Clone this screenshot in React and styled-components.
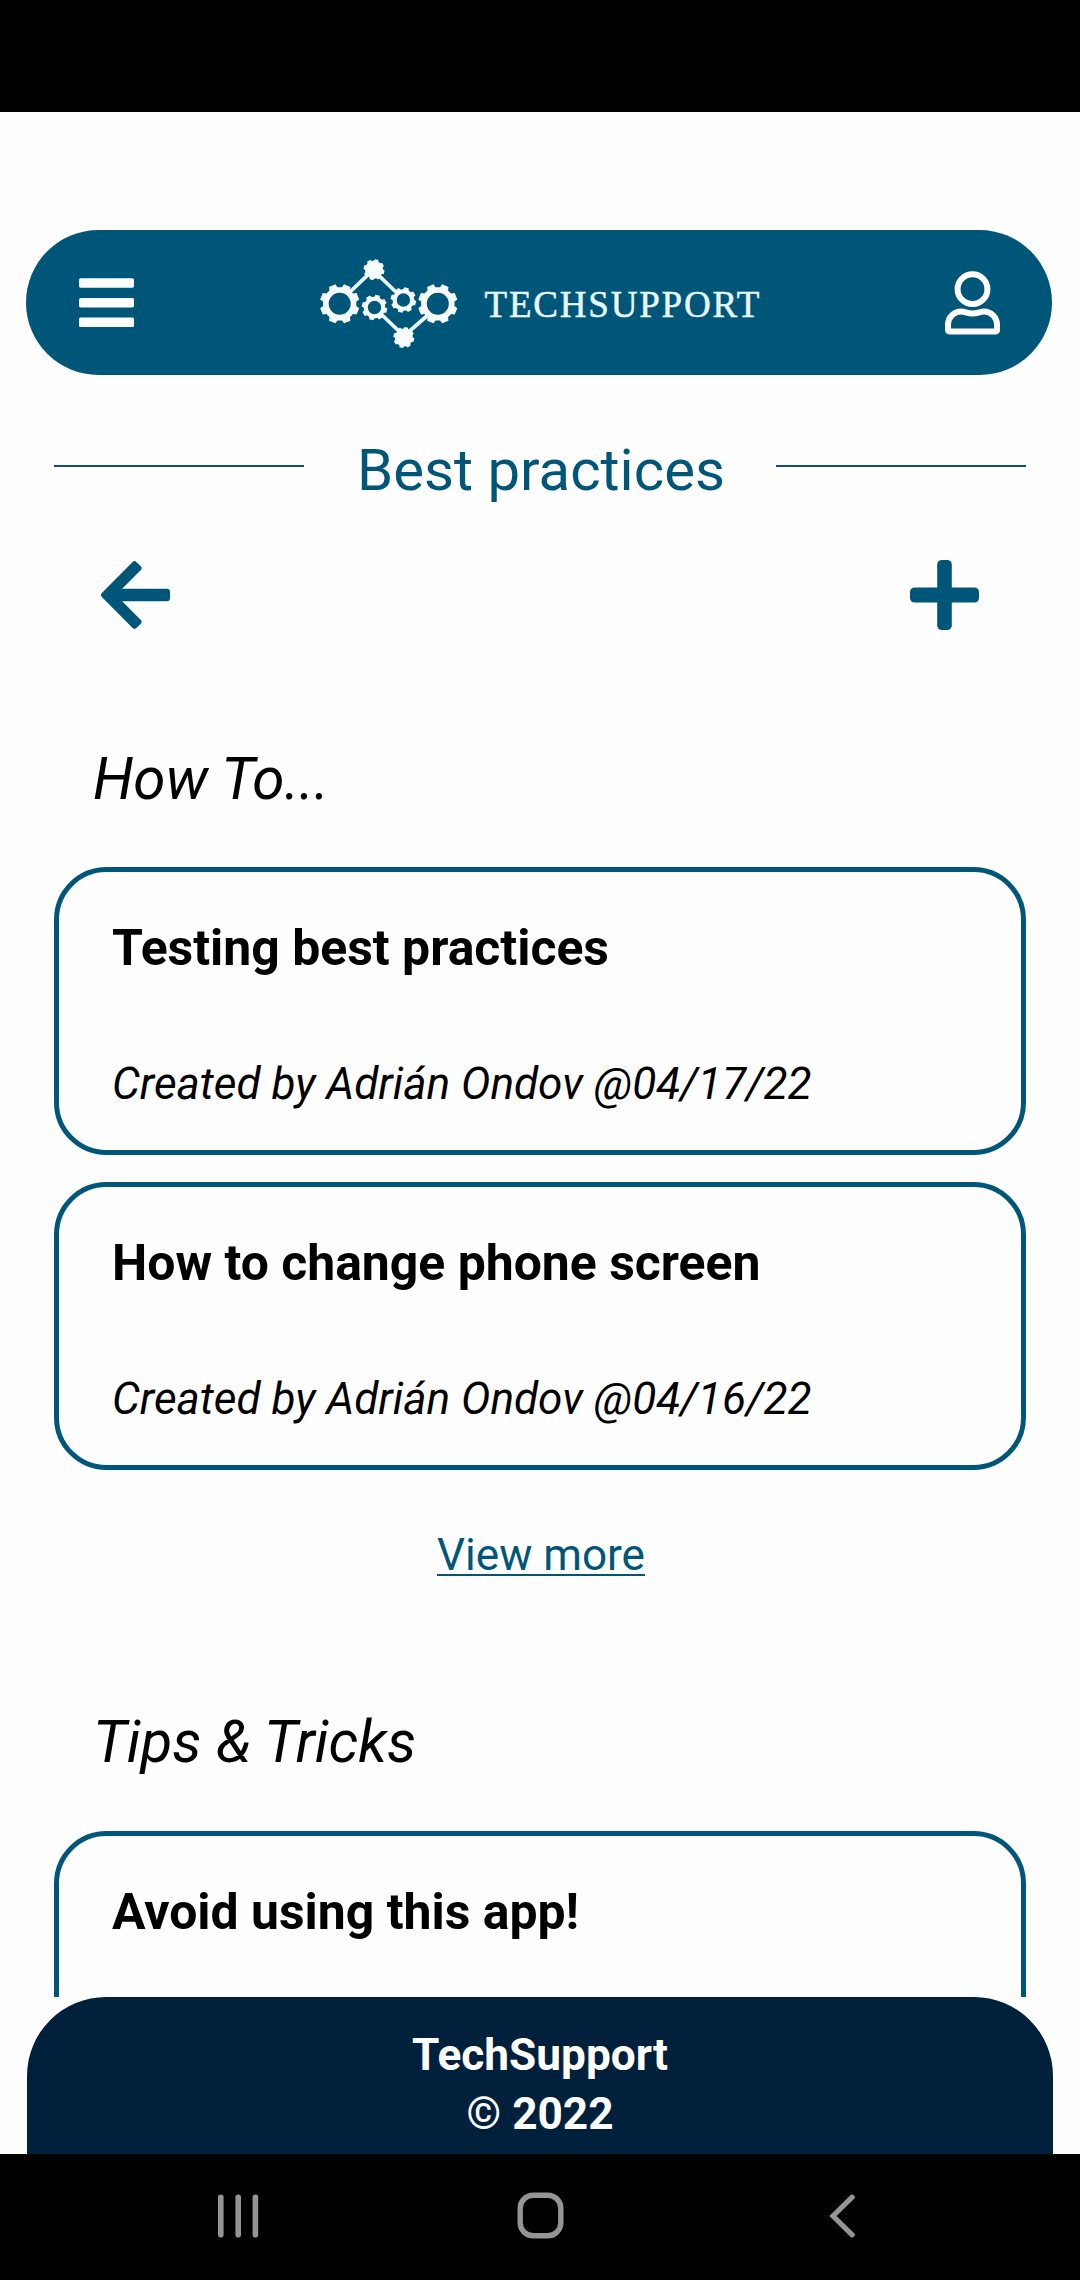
import React from "react";
import styled, { createGlobalStyle } from "styled-components";

const teal = "#005679";
const navy = "#00203b";

const GlobalStyle = createGlobalStyle`
  * { box-sizing: border-box; }
  body { margin: 0; background: #fefefe; font-family: Roboto, sans-serif; }
  h1, h2, h3, p { margin: 0; font-weight: 400; }
  svg { display: block; flex: none; }
  button { border: 0; padding: 0; background: none; }
`;

const Screen = styled.div`
  display: flex;
  flex-direction: column;
  width: 1080px;
  height: 2280px;
  overflow: hidden;
  background: #fefefe;
`;

const StatusBar = styled.div`
  flex: none;
  height: 112px;
  background: #000;
`;

const Content = styled.main`
  flex: 1;
  min-height: 0;
  overflow: hidden;
  padding: 118px 54px 0;
`;

const Header = styled.header`
  display: flex;
  align-items: center;
  justify-content: space-between;
  height: 145px;
  margin: 0 -26px 0 -28px;
  padding: 0 52px 0 53px;
  border-radius: 72.5px;
  background: ${teal};
`;

const Brand = styled.div`
  display: flex;
  align-items: center;
  gap: 27px;
`;

const BrandName = styled.span`
  width: 275px;
  padding-top: 4px;
  font: 37px/44px "Liberation Serif", serif;
  letter-spacing: 1.8px;
  color: #e9f8ff;
  -webkit-text-stroke: 0.5px #e9f8ff;
  white-space: nowrap;
`;

const TitleRow = styled.div`
  display: flex;
  align-items: center;
  justify-content: space-between;
  height: 68px;
  margin-top: 61px;
`;

const Rule = styled.span`
  width: 250px;
  height: 2px;
  margin-bottom: 8px;
  background: #10526c;
`;

const PageTitle = styled.h1`
  padding-left: 2px;
  font-size: 58.1px;
  line-height: 68px;
  color: ${teal};
  white-space: nowrap;
`;

const Actions = styled.div`
  display: flex;
  align-items: center;
  justify-content: space-between;
  height: 70px;
  margin-top: 56px;
  padding: 0 47px 0 46px;
`;

const Section = styled.section`
  margin-top: ${(p) => p.$gap}px;
`;

const SectionTitle = styled.h2`
  padding-left: 39px;
  font-size: 58.3px;
  line-height: 68px;
  font-style: italic;
  color: #000;
`;

const CardList = styled.div`
  display: flex;
  flex-direction: column;
  gap: 27px;
  margin-top: ${(p) => p.$gap}px;
`;

const Card = styled.article`
  height: 288px;
  padding: 46px 53px 0;
  border: 5px solid ${teal};
  border-radius: 52.5px;
`;

const CardTitle = styled.h3`
  font-size: 49.9px;
  line-height: 60px;
  font-weight: 700;
  color: #000;
`;

const CardMeta = styled.p`
  margin-top: 79px;
  font-size: 44.1px;
  line-height: 54px;
  font-style: italic;
  color: #000;
`;

const ViewMore = styled.a`
  display: block;
  width: fit-content;
  margin: 58px auto 0;
  padding-left: 2px;
  font-size: 44.1px;
  line-height: 54px;
  color: ${teal};
  text-decoration: underline;
  text-decoration-thickness: 2px;
  text-underline-offset: 4px;
  text-decoration-skip-ink: none;
`;

const Footer = styled.footer`
  flex: none;
  height: 157px;
  margin: 0 27px;
  padding-top: 29px;
  border-radius: 79px 79px 0 0;
  background: ${navy};
  color: #fff;
  font-size: 44.2px;
  line-height: 59px;
  font-weight: 700;
  text-align: center;
`;

const NavBar = styled.nav`
  display: flex;
  flex: none;
  align-items: center;
  justify-content: space-between;
  height: 126px;
  padding: 0 224px 3px 217px;
  background: #000;
`;

const HomeButton = styled.button`
  margin-right: 8px;
`;

function gearPath(cx, cy, outer, root, teeth, turn) {
  const step = (Math.PI * 2) / teeth;
  const pts = [];
  for (let i = 0; i < teeth; i++) {
    const a = turn + i * step;
    [
      [-0.33, root],
      [-0.22, outer],
      [0.22, outer],
      [0.33, root],
    ].forEach(([f, r]) => {
      const t = a + f * step;
      pts.push(`${(cx + r * Math.cos(t)).toFixed(2)} ${(cy + r * Math.sin(t)).toFixed(2)}`);
    });
  }
  return `M${pts.join("L")}Z`;
}

const Gear = ({ x, y, outer, root, hole, teeth = 8, turn = Math.PI / 8 }) => (
  <path
    fillRule="evenodd"
    d={
      gearPath(x, y, outer, root, teeth, turn) +
      (hole ? `M${x - hole} ${y}a${hole} ${hole} 0 1 0 ${hole * 2} 0a${hole} ${hole} 0 1 0 ${-hole * 2} 0Z` : "")
    }
  />
);

const Logo = () => (
  <svg width="138" height="90" viewBox="320 258 138 90" fill="#f6fdff">
    <path d="M350 292L373 270L398 294M381 314L404 336L428 315" fill="none" stroke="#e6f6fc" strokeWidth="3.8" />
    <Gear x={339.7} y={303.8} outer={20} root={16.8} hole={11} />
    <Gear x={437.8} y={303.8} outer={20} root={16.8} hole={11} />
    <Gear x={374.5} y={307.5} outer={12.9} root={10.8} hole={6.7} turn={0.25} />
    <Gear x={403.4} y={300} outer={12.9} root={10.8} hole={6.7} turn={0.25} />
    <Gear x={374} y={269.7} outer={10.6} root={9} turn={0.25} />
    <Gear x={403.8} y={337.5} outer={10.6} root={9} turn={0.25} />
  </svg>
);

const MenuIcon = () => (
  <svg width="55" height="50" viewBox="0 0 55 50" fill="#fff">
    <rect y="0.3" width="55" height="9.4" rx="1.6" />
    <rect y="20" width="55" height="9.4" rx="1.6" />
    <rect y="39.6" width="55" height="9.4" rx="1.6" />
  </svg>
);

const UserIcon = () => (
  <svg width="55" height="64" viewBox="945 270.5 55 64" fill="none" stroke="#fff" strokeWidth="6">
    <circle cx="972.5" cy="288.7" r="14.9" />
    <path d="M950 331H995Q997 331 997 329V324A13 13 0 0 0 984 311C980 311 978 313 972.5 313C967 313 965 311 961 311A13 13 0 0 0 948 324V329Q948 331 950 331Z" />
  </svg>
);

const BackIcon = () => (
  <svg width="70" height="70" viewBox="100 560.3 70 70" fill={teal} stroke={teal} strokeWidth="6" strokeLinejoin="round">
    <path d="M104 595.3L134.5 564.6L138.5 568.5L114.8 592.1H167V598.5H114.8L138.5 622.1L134.5 626Z" />
  </svg>
);

const PlusIcon = () => (
  <svg width="69" height="70" viewBox="0 0 69 70" fill={teal}>
    <rect x="27.2" width="14.6" height="70" rx="4.6" />
    <rect y="27.5" width="69" height="15" rx="4.6" />
  </svg>
);

const RecentsIcon = () => (
  <svg width="43" height="44" viewBox="0 0 43 44" fill="#949494">
    <rect x="1" y="0.5" width="5.6" height="43" rx="2.8" />
    <rect x="18.4" y="0.5" width="5.6" height="43" rx="2.8" />
    <rect x="35.6" y="0.5" width="5.6" height="43" rx="2.8" />
  </svg>
);

const HomeIcon = () => (
  <svg width="47" height="47" viewBox="0 0 47 47" fill="none" stroke="#949494" strokeWidth="5.4">
    <rect x="3.2" y="3.2" width="40.6" height="40.6" rx="13" />
  </svg>
);

const ReturnIcon = () => (
  <svg width="27" height="44" viewBox="0 0 27 44" fill="none" stroke="#949494" strokeWidth="5.2" strokeLinecap="round">
    <path d="M23.2 3.2L4 22L23.2 40.8" />
  </svg>
);

const howTos = [
  { title: "Testing best practices", meta: "Created by Adrián Ondov @04/17/22" },
  { title: "How to change phone screen", meta: "Created by Adrián Ondov @04/16/22" },
];

export default function App() {
  return (
    <Screen>
      <GlobalStyle />
      <StatusBar />
      <Content>
        <Header>
          <button aria-label="Menu"><MenuIcon /></button>
          <Brand>
            <Logo />
            <BrandName>TECHSUPPORT</BrandName>
          </Brand>
          <button aria-label="Profile"><UserIcon /></button>
        </Header>
        <TitleRow>
          <Rule />
          <PageTitle>Best practices</PageTitle>
          <Rule />
        </TitleRow>
        <Actions>
          <button aria-label="Back"><BackIcon /></button>
          <button aria-label="Add"><PlusIcon /></button>
        </Actions>
        <Section $gap={115}>
          <SectionTitle>How To...</SectionTitle>
          <CardList $gap={54}>
            {howTos.map((c) => (
              <Card key={c.title}>
                <CardTitle>{c.title}</CardTitle>
                <CardMeta>{c.meta}</CardMeta>
              </Card>
            ))}
          </CardList>
          <ViewMore>View more</ViewMore>
        </Section>
        <Section $gap={126}>
          <SectionTitle>Tips &amp; Tricks</SectionTitle>
          <CardList $gap={55}>
            <Card>
              <CardTitle>Avoid using this app!</CardTitle>
            </Card>
          </CardList>
        </Section>
      </Content>
      <Footer>
        <div>TechSupport</div>
        <div>© 2022</div>
      </Footer>
      <NavBar>
        <button aria-label="Recents"><RecentsIcon /></button>
        <HomeButton aria-label="Home"><HomeIcon /></HomeButton>
        <button aria-label="Return"><ReturnIcon /></button>
      </NavBar>
    </Screen>
  );
}
